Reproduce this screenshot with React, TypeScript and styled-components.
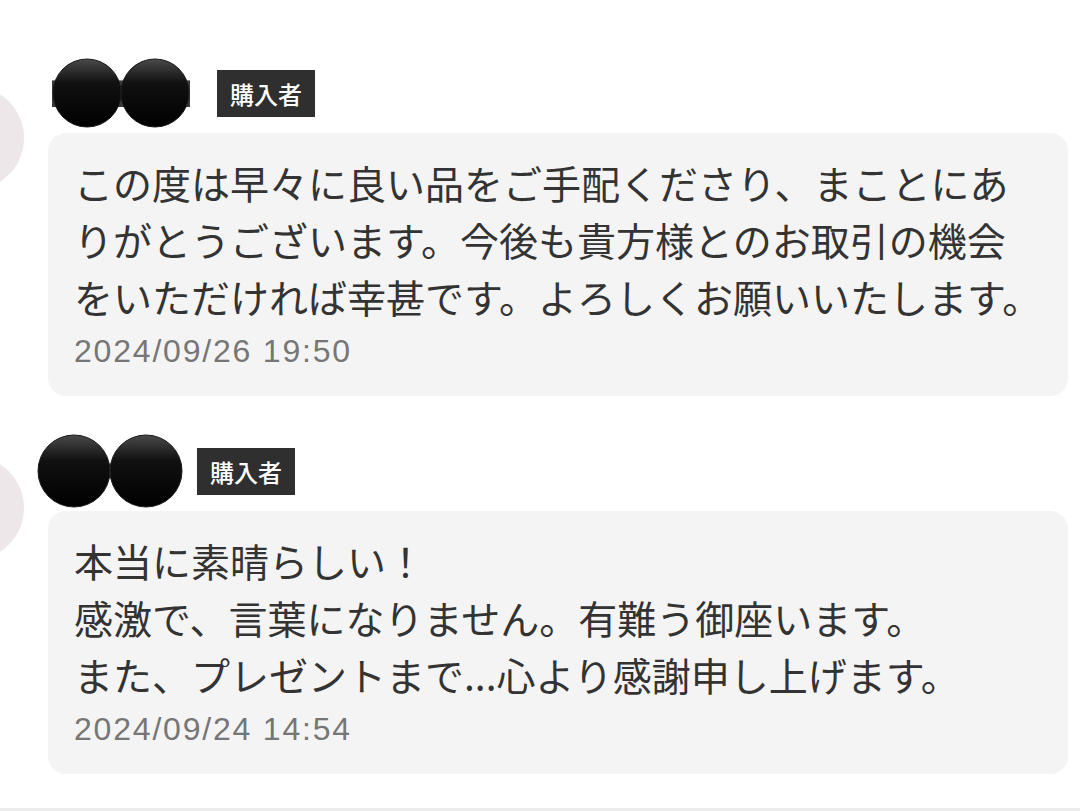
import React from "react";
import styled, { createGlobalStyle } from "styled-components";

const Global = createGlobalStyle`
  html, body { margin: 0; padding: 0; background: #ffffff; overflow: hidden; }
  body { font-family: "Noto Sans CJK JP", "Noto Sans", sans-serif; }
`;

const Page = styled.div`
  width: 1080px;
  height: 811px;
  padding-top: 58px;
  box-sizing: border-box;
  display: flex;
  flex-direction: column;
  gap: 38px;
  overflow: hidden;
  position: relative;
`;

const Review = styled.div`
  display: flex;
  align-items: flex-start;
  gap: 24px;
`;

const Avatar = styled.div<{ $top: number }>`
  flex: none;
  width: 104px;
  height: 104px;
  margin-left: -80px;
  margin-top: ${(p) => p.$top}px;
  border-radius: 50%;
  background: #eee7e9;
`;

const Body = styled.div<{ $gap: number }>`
  width: 1020px;
  display: flex;
  flex-direction: column;
  gap: ${(p) => p.$gap}px;
`;

const Header = styled.div<{ $shift: number; $gap: number }>`
  display: flex;
  align-items: center;
  gap: ${(p) => p.$gap}px;
  margin-left: ${(p) => p.$shift}px;
`;

const Badge = styled.span`
  display: inline-block;
  height: 47px;
  line-height: 47px;
  padding: 0 13px;
  background: #2f2f2f;
  color: #ffffff;
  font-size: 24px;
  font-weight: 500;
`;

const Card = styled.div`
  background: #f4f4f4;
  border-radius: 18px;
  padding: 21px 27px 25px 26px;
`;

const Message = styled.p`
  margin: 0;
  color: #333333;
  font-size: 39px;
  line-height: 57px;
  white-space: nowrap;
`;

const Stamp = styled.div`
  margin-top: 6px;
  font-family: "Liberation Sans", Arial, sans-serif;
  font-size: 32px;
  line-height: 40px;
  letter-spacing: 1.8px;
  color: #767676;
`;

const Divider = styled.div`
  position: absolute;
  left: 0;
  right: 0;
  bottom: 0;
  height: 3px;
  background: #ececec;
`;

function NameMask({ r, id, peek }: { r: number; id: string; peek?: boolean }) {
  const w = r * 4 + 2;
  const h = r * 2 + 2;
  return (
    <svg width={w} height={h} viewBox={`0 0 ${w} ${h}`}>
      <defs>
        <linearGradient id={id} x1="0" y1="0" x2="0" y2="1">
          <stop offset="0" stopColor="#4a4a4a" />
          <stop offset="0.35" stopColor="#111" />
          <stop offset="1" stopColor="#000" />
        </linearGradient>
      </defs>
      {peek && <rect x={0} y={h * 0.32} width={w} height={h * 0.38} fill="#3a3a3a" />}
      <circle cx={r + 1} cy={r + 1} r={r} fill={`url(#${id})`} stroke="#1a1a1a" strokeWidth={1} />
      <circle cx={3 * r + 1} cy={r + 1} r={r} fill={`url(#${id})`} stroke="#1a1a1a" strokeWidth={1} />
    </svg>
  );
}

const reviews = [
  {
    id: "a",
    r: 34,
    shift: 4,
    gap: 27,
    bodyGap: 5,
    peek: true,
    avatarTop: 28,
    lines: [
      "この度は早々に良い品をご手配くださり、まことにあ",
      "りがとうございます。今後も貴方様とのお取引の機会",
      "をいただければ幸甚です。よろしくお願いいたします。",
    ],
    date: "2024/09/26 19:50",
  },
  {
    id: "b",
    r: 36,
    shift: -11,
    gap: 14,
    bodyGap: 3,
    peek: false,
    avatarTop: 22,
    lines: [
      "本当に素晴らしい！",
      "感激で、言葉になりません。有難う御座います。",
      "また、プレゼントまで...心より感謝申し上げます。",
    ],
    date: "2024/09/24 14:54",
  },
];

export default function App() {
  return (
    <>
      <Global />
      <Page>
        {reviews.map((rv) => (
          <Review key={rv.id}>
            <Avatar $top={rv.avatarTop} />
            <Body $gap={rv.bodyGap}>
              <Header $shift={rv.shift} $gap={rv.gap}>
                <NameMask r={rv.r} id={`g-${rv.id}`} peek={rv.peek} />
                <Badge>購入者</Badge>
              </Header>
              <Card>
                <Message>
                  {rv.lines.map((l, i) => (
                    <React.Fragment key={i}>
                      {l}
                      {i < rv.lines.length - 1 && <br />}
                    </React.Fragment>
                  ))}
                </Message>
                <Stamp>{rv.date}</Stamp>
              </Card>
            </Body>
          </Review>
        ))}
        <Divider />
      </Page>
    </>
  );
}
